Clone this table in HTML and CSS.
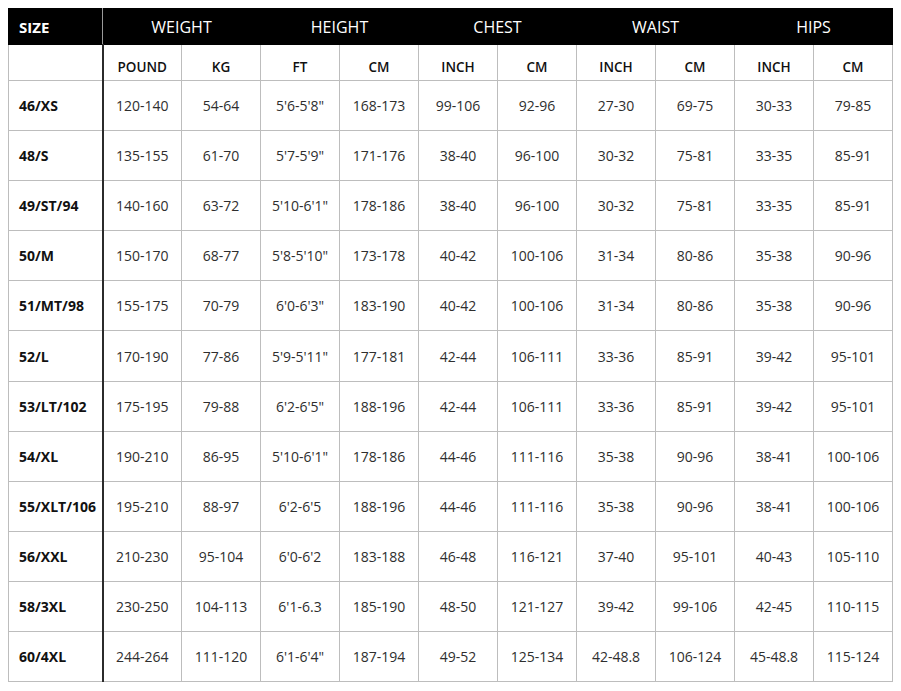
FILE: index.html
```html
<!DOCTYPE html>
<html>
<head>
<meta charset="utf-8">
<link rel="stylesheet" href="styles.css">
</head>
<body>
<table class="size-table">
  <colgroup>
    <col class="c-size">
    <col><col><col><col><col><col><col><col><col><col>
  </colgroup>
  <thead>
    <tr class="group-row">
      <th class="size-head">SIZE</th>
      <th colspan="2">WEIGHT</th>
      <th colspan="2">HEIGHT</th>
      <th colspan="2">CHEST</th>
      <th colspan="2">WAIST</th>
      <th colspan="2">HIPS</th>
    </tr>
    <tr class="unit-row">
      <th class="size-cell"></th>
      <th>POUND</th><th>KG</th>
      <th>FT</th><th>CM</th>
      <th>INCH</th><th>CM</th>
      <th>INCH</th><th>CM</th>
      <th>INCH</th><th>CM</th>
    </tr>
  </thead>
  <tbody>
    <tr><th class="size-cell">46/XS</th><td>120-140</td><td>54-64</td><td>5'6-5'8"</td><td>168-173</td><td>99-106</td><td>92-96</td><td>27-30</td><td>69-75</td><td>30-33</td><td>79-85</td></tr>
    <tr><th class="size-cell">48/S</th><td>135-155</td><td>61-70</td><td>5'7-5'9"</td><td>171-176</td><td>38-40</td><td>96-100</td><td>30-32</td><td>75-81</td><td>33-35</td><td>85-91</td></tr>
    <tr><th class="size-cell">49/ST/94</th><td>140-160</td><td>63-72</td><td>5'10-6'1"</td><td>178-186</td><td>38-40</td><td>96-100</td><td>30-32</td><td>75-81</td><td>33-35</td><td>85-91</td></tr>
    <tr><th class="size-cell">50/M</th><td>150-170</td><td>68-77</td><td>5'8-5'10"</td><td>173-178</td><td>40-42</td><td>100-106</td><td>31-34</td><td>80-86</td><td>35-38</td><td>90-96</td></tr>
    <tr><th class="size-cell">51/MT/98</th><td>155-175</td><td>70-79</td><td>6'0-6'3"</td><td>183-190</td><td>40-42</td><td>100-106</td><td>31-34</td><td>80-86</td><td>35-38</td><td>90-96</td></tr>
    <tr><th class="size-cell">52/L</th><td>170-190</td><td>77-86</td><td>5'9-5'11"</td><td>177-181</td><td>42-44</td><td>106-111</td><td>33-36</td><td>85-91</td><td>39-42</td><td>95-101</td></tr>
    <tr><th class="size-cell">53/LT/102</th><td>175-195</td><td>79-88</td><td>6'2-6'5"</td><td>188-196</td><td>42-44</td><td>106-111</td><td>33-36</td><td>85-91</td><td>39-42</td><td>95-101</td></tr>
    <tr><th class="size-cell">54/XL</th><td>190-210</td><td>86-95</td><td>5'10-6'1"</td><td>178-186</td><td>44-46</td><td>111-116</td><td>35-38</td><td>90-96</td><td>38-41</td><td>100-106</td></tr>
    <tr><th class="size-cell">55/XLT/106</th><td>195-210</td><td>88-97</td><td>6'2-6'5</td><td>188-196</td><td>44-46</td><td>111-116</td><td>35-38</td><td>90-96</td><td>38-41</td><td>100-106</td></tr>
    <tr><th class="size-cell">56/XXL</th><td>210-230</td><td>95-104</td><td>6'0-6'2</td><td>183-188</td><td>46-48</td><td>116-121</td><td>37-40</td><td>95-101</td><td>40-43</td><td>105-110</td></tr>
    <tr><th class="size-cell">58/3XL</th><td>230-250</td><td>104-113</td><td>6'1-6.3</td><td>185-190</td><td>48-50</td><td>121-127</td><td>39-42</td><td>99-106</td><td>42-45</td><td>110-115</td></tr>
    <tr><th class="size-cell">60/4XL</th><td>244-264</td><td>111-120</td><td>6'1-6'4"</td><td>187-194</td><td>49-52</td><td>125-134</td><td>42-48.8</td><td>106-124</td><td>45-48.8</td><td>115-124</td></tr>
  </tbody>
</table>
</body>
</html>
```

FILE: styles.css
```css
html, body {
  background: #ffffff;
}
body {
  margin: 8px;
  font-family: "Open Sans", "Noto Sans", sans-serif;
  color: #1a1a1a;
}
.size-table {
  width: 885px;
  table-layout: fixed;
  border-collapse: collapse;
  border-spacing: 0;
}
.c-size {
  width: 94px;
}
.size-table th,
.size-table td {
  padding: 0;
  text-align: center;
  border: 1px solid #bdbdbd;
  font-size: 14px;
  white-space: nowrap;
}
.group-row th {
  height: 35px;
  background: #000;
  color: #fff;
  font-weight: 400;
  font-size: 16px;
  border-color: #000;
}
.group-row .size-head {
  text-align: left;
  padding-left: 10px;
  font-weight: 700;
  font-size: 15px;
  border-right: 1px solid #9a9a9a;
}
.unit-row th {
  height: 27px;
  padding-top: 8px;
  font-weight: 600;
  font-size: 13.5px;
  color: #111;
}
tbody tr {
  height: 50.1px;
}
.size-table td {
  color: #2e2e2e;
}
.size-cell {
  text-align: left !important;
  padding-left: 10px !important;
  font-weight: 700;
  font-size: 13px;
  color: #111;
  border-right: 2px solid #2b2b2b !important;
}
```
